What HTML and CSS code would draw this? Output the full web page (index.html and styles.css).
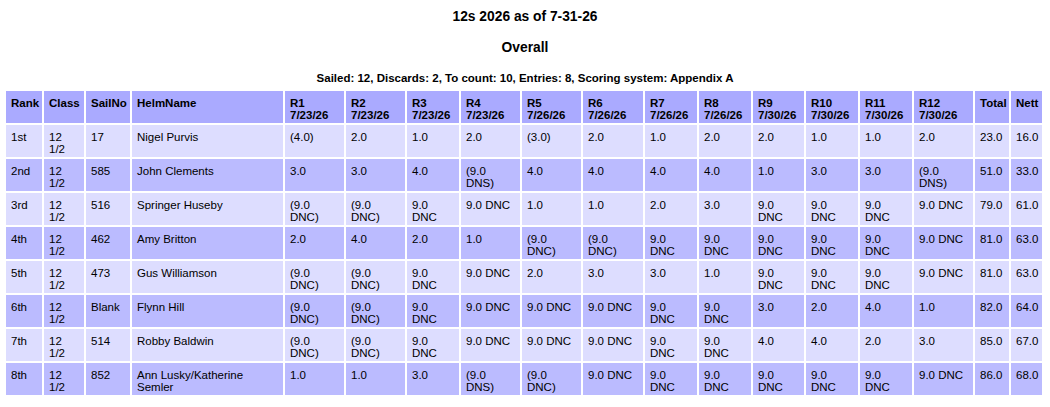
FILE: index.html
```html
<!DOCTYPE html>
<html>
<head>
<meta charset="utf-8">
<title>12s 2026 as of 7-31-26</title>
<link rel="stylesheet" href="styles.css">
</head>
<body>
<h1 class="title">12s 2026 as of 7-31-26</h1>
<h2 class="subtitle">Overall</h2>
<p class="summary">Sailed: 12, Discards: 2, To count: 10, Entries: 8, Scoring system: Appendix A</p>
<table class="results">
<thead>
<tr class="hdr">
<th class="c-rank">Rank</th><th class="c-class">Class</th><th class="c-sail">SailNo</th><th class="c-helm">HelmName</th>
<th class="w59">R1<br>7/23/26</th><th class="w59">R2<br>7/23/26</th><th class="w52">R3<br>7/23/26</th><th class="w59">R4<br>7/23/26</th>
<th class="w59">R5<br>7/26/26</th><th class="w60">R6<br>7/26/26</th><th class="w52">R7<br>7/26/26</th><th class="w52">R8<br>7/26/26</th>
<th class="w51">R9<br>7/30/26</th><th class="w52">R10<br>7/30/26</th><th class="w52">R11<br>7/30/26</th><th class="w59">R12<br>7/30/26</th>
<th class="c-total">Total</th><th class="c-nett">Nett</th>
</tr>
</thead>
<tbody>
<tr><td>1st</td><td>12 1/2</td><td>17</td><td>Nigel Purvis</td><td>(4.0)</td><td>2.0</td><td>1.0</td><td>2.0</td><td>(3.0)</td><td>2.0</td><td>1.0</td><td>2.0</td><td>2.0</td><td>1.0</td><td>1.0</td><td>2.0</td><td>23.0</td><td>16.0</td></tr>
<tr><td>2nd</td><td>12 1/2</td><td>585</td><td>John Clements</td><td>3.0</td><td>3.0</td><td>4.0</td><td>(9.0 DNS)</td><td>4.0</td><td>4.0</td><td>4.0</td><td>4.0</td><td>1.0</td><td>3.0</td><td>3.0</td><td>(9.0 DNS)</td><td>51.0</td><td>33.0</td></tr>
<tr><td>3rd</td><td>12 1/2</td><td>516</td><td>Springer Huseby</td><td>(9.0 DNC)</td><td>(9.0 DNC)</td><td>9.0 DNC</td><td>9.0 DNC</td><td>1.0</td><td>1.0</td><td>2.0</td><td>3.0</td><td>9.0 DNC</td><td>9.0 DNC</td><td>9.0 DNC</td><td>9.0 DNC</td><td>79.0</td><td>61.0</td></tr>
<tr><td>4th</td><td>12 1/2</td><td>462</td><td>Amy Britton</td><td>2.0</td><td>4.0</td><td>2.0</td><td>1.0</td><td>(9.0 DNC)</td><td>(9.0 DNC)</td><td>9.0 DNC</td><td>9.0 DNC</td><td>9.0 DNC</td><td>9.0 DNC</td><td>9.0 DNC</td><td>9.0 DNC</td><td>81.0</td><td>63.0</td></tr>
<tr><td>5th</td><td>12 1/2</td><td>473</td><td>Gus Williamson</td><td>(9.0 DNC)</td><td>(9.0 DNC)</td><td>9.0 DNC</td><td>9.0 DNC</td><td>2.0</td><td>3.0</td><td>3.0</td><td>1.0</td><td>9.0 DNC</td><td>9.0 DNC</td><td>9.0 DNC</td><td>9.0 DNC</td><td>81.0</td><td>63.0</td></tr>
<tr><td>6th</td><td>12 1/2</td><td>Blank</td><td>Flynn Hill</td><td>(9.0 DNC)</td><td>(9.0 DNC)</td><td>9.0 DNC</td><td>9.0 DNC</td><td>9.0 DNC</td><td>9.0 DNC</td><td>9.0 DNC</td><td>9.0 DNC</td><td>3.0</td><td>2.0</td><td>4.0</td><td>1.0</td><td>82.0</td><td>64.0</td></tr>
<tr><td>7th</td><td>12 1/2</td><td>514</td><td>Robby Baldwin</td><td>(9.0 DNC)</td><td>(9.0 DNC)</td><td>9.0 DNC</td><td>9.0 DNC</td><td>9.0 DNC</td><td>9.0 DNC</td><td>9.0 DNC</td><td>9.0 DNC</td><td>4.0</td><td>4.0</td><td>2.0</td><td>3.0</td><td>85.0</td><td>67.0</td></tr>
<tr><td>8th</td><td>12 1/2</td><td>852</td><td>Ann Lusky/Katherine Semler</td><td>1.0</td><td>1.0</td><td>3.0</td><td>(9.0 DNS)</td><td>(9.0 DNC)</td><td>9.0 DNC</td><td>9.0 DNC</td><td>9.0 DNC</td><td>9.0 DNC</td><td>9.0 DNC</td><td>9.0 DNC</td><td>9.0 DNC</td><td>86.0</td><td>68.0</td></tr>
</tbody>
</table>
</body>
</html>
```
FILE: styles.css
```css
body {
  margin: 0 4px;
  background: #ffffff;
  color: #000000;
  font-family: "Liberation Sans", Arial, sans-serif;
}

.title,
.subtitle {
  margin: 0;
  font-size: 13.8px;
  line-height: 16px;
  font-weight: bold;
  text-align: center;
}

.title {
  padding-top: 9px;
}

.subtitle {
  margin-top: 15px;
}

.summary {
  margin: 15px 0 0;
  font-size: 11.5px;
  line-height: 14px;
  font-weight: bold;
  text-align: center;
}

.results {
  margin-top: 4px;
  width: 1040px;
  table-layout: fixed;
  border-collapse: separate;
  border-spacing: 2px;
  font-size: 11.5px;
  line-height: 12px;
}

.results th,
.results td {
  box-sizing: border-box;
  padding: 6px 5px 2px 5px;
  vertical-align: top;
  text-align: left;
}

.results th {
  background: #aaaaff;
  font-weight: bold;
}

.results tbody tr:nth-child(odd) td {
  background: #ddddff;
}

.results tbody tr:nth-child(even) td {
  background: #bbbbff;
}

.c-rank { width: 36px; }
.c-class { width: 40px; }
.c-sail { width: 44px; }
.c-helm { width: 151px; }
.w51 { width: 51px; }
.w52 { width: 52px; }
.w59 { width: 59px; }
.w60 { width: 60px; }
.c-total { width: 34px; }
.c-nett { width: 31px; }
```
